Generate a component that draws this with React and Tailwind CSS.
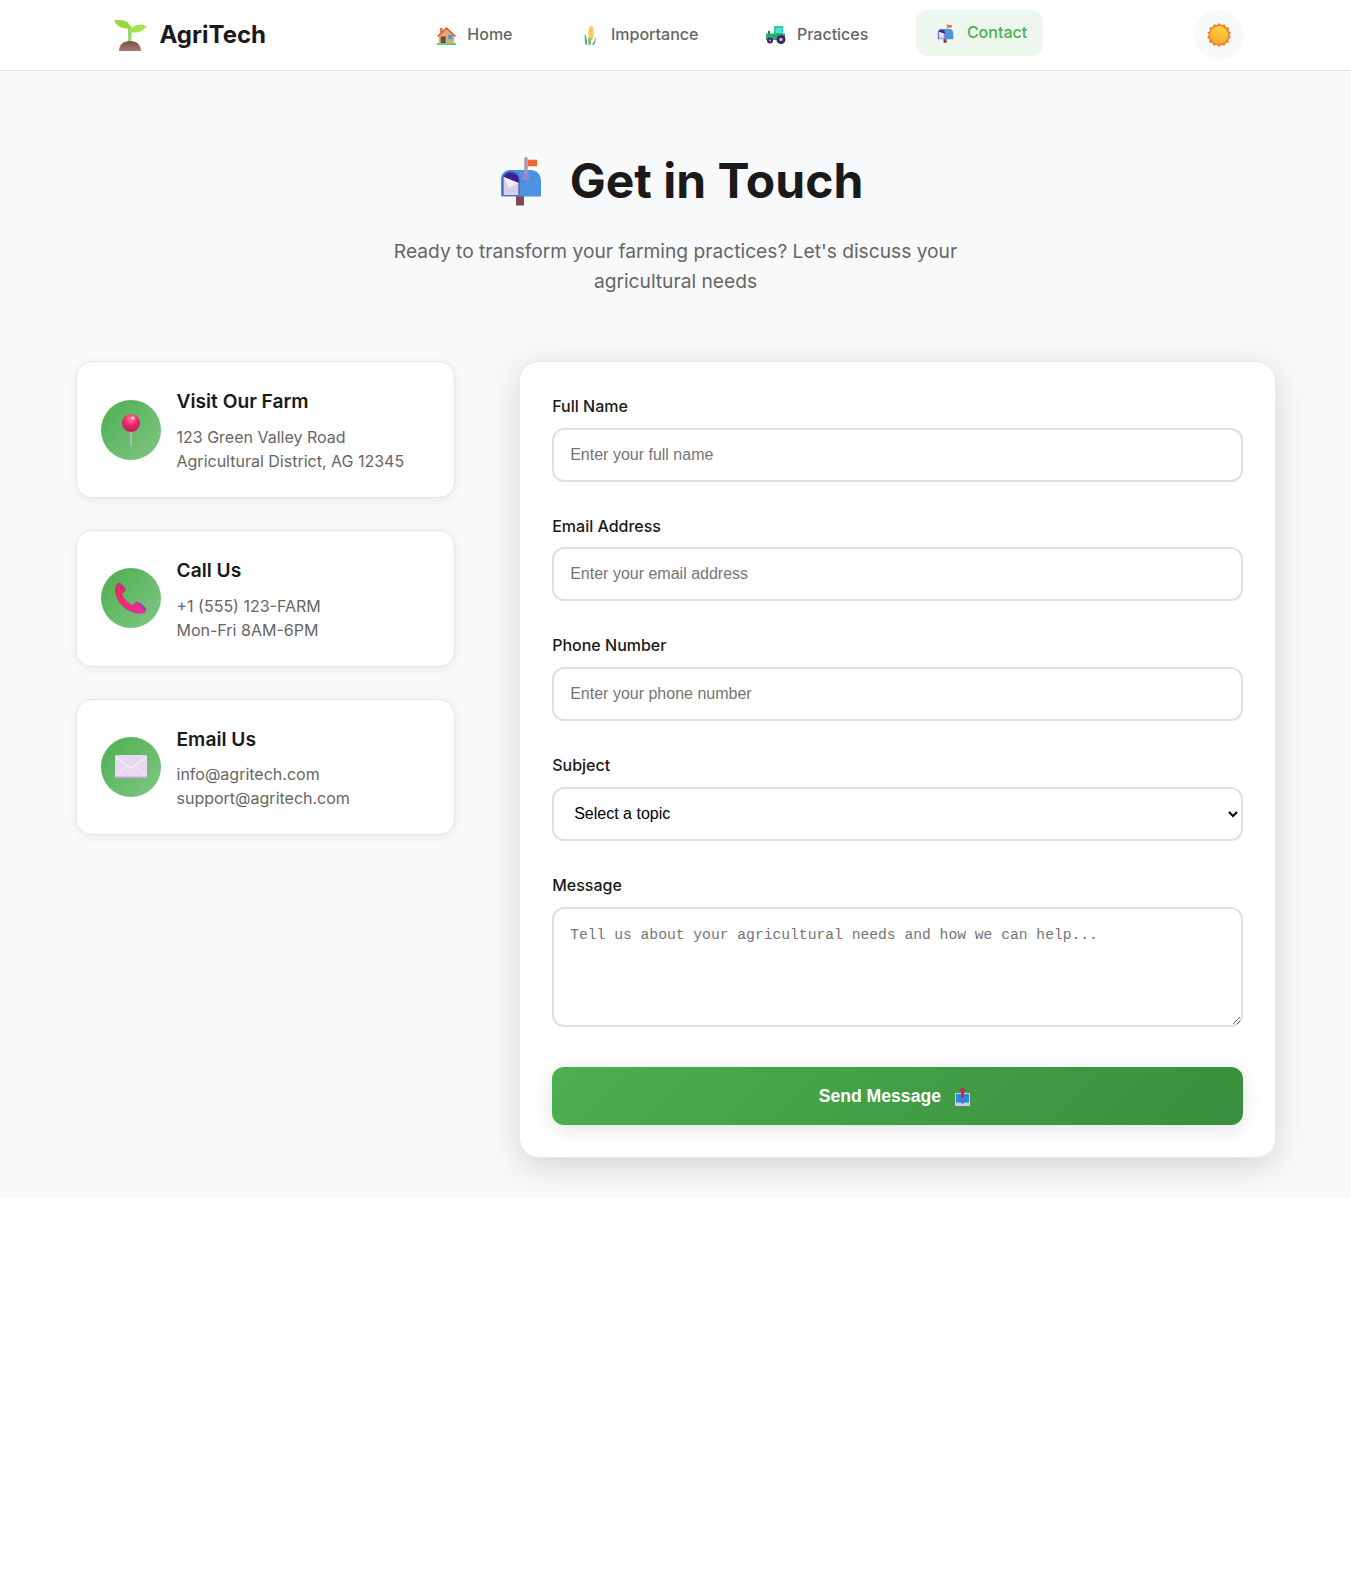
import { useState } from 'react';

// Emoji drawings: no emoji font in the sandbox, so each one is a small svg
function Seedling({ className }) {
    return (
        <svg className={className} viewBox="0 0 33 31" fill="none">
            <defs>
                <linearGradient id="soil" x1="0" y1="0" x2="0" y2="1">
                    <stop offset="0" stopColor="#7f4f45" />
                    <stop offset="1" stopColor="#a67c70" />
                </linearGradient>
            </defs>
            <path d="M14 6h3.500v17H14z" fill="#9ad86d" />
            <path d="M0 .5C5-.5 13 0 15.500 5c.7 1.500.5 3.500-1 3.500C8 8.500 2.500 6 0 .5z" fill="#97d739" />
            <path d="M32.500 6C28 4 20 4 17 8.500c-.8 1.500-.5 3.500 1 4C24 13 30 11 32.500 6z" fill="#a6e24f" />
            <path d="M5 31c0-6 4-10 11-10s11 4 11 10z" fill="url(#soil)" />
        </svg>
    );
}

function House({ className }) {
    return (
        <svg className={className} viewBox="0 0 20 20" fill="none">
            <path d="M3 2h3v5H3z" fill="#b98a62" />
            <path d="M2 9 10 2l8 7v9H2z" fill="#e3a877" />
            <path d="M0 10.500 10 1l10 9.500-1.200 1.200L10 3.400 1.200 11.700z" fill="#e6532f" />
            <path d="M4 11h5v7H4z" fill="#70453a" />
            <path d="M11.500 9.500h4.500v4.500h-4.500z" fill="#3fa4ec" />
            <path d="M0 18h20v2H0z" fill="#4fce72" />
        </svg>
    );
}

function Corn({ className }) {
    return (
        <svg className={className} viewBox="0 0 13 20" fill="none">
            <path d="M7 0c2-.500 4 .500 3 2.500-.5 1 1 1.500.5 3.500-.300 1.500.5 2 0 4-.5 2-1 4-2.500 5.500L5 14C4 9 5 2 7 0z" fill="#f6c544" />
            <path d="M7 3h4M6.500 6.500h5M6.500 10h4" stroke="#fbe28c" strokeWidth="1" />
            <path d="M1 8c1.500 2 2.500 6 2.500 12H1.500C.8 16 .3 11 1 8z" fill="#6ba77f" />
            <path d="M12.500 11c.3 3-.3 6-1.500 9H8.500C11 17 11.800 14 12.500 11z" fill="#4f9aa0" />
            <path d="M4.500 13h3v7h-3z" fill="#7fb98b" />
        </svg>
    );
}

function Tractor({ className }) {
    return (
        <svg className={className} viewBox="0 0 20 18" fill="none">
            <path d="M8 0h9v8H8z" fill="#2ecf8d" />
            <path d="M10 2h6v5h-6z" fill="#4fd8f0" />
            <path d="M0 7.500h19v6.500H0z" fill="#27ad6b" />
            <path d="M2 5h2v3H2z" fill="#1d7d54" />
            <circle cx="4" cy="14.500" r="3" fill="#43235f" />
            <circle cx="4" cy="14.500" r="1" fill="#c9b8d8" />
            <circle cx="15" cy="13.500" r="4.500" fill="#43235f" />
            <circle cx="15" cy="13.500" r="1.700" fill="#c9b8d8" />
        </svg>
    );
}

function Mailbox({ className }) {
    return (
        <svg className={className} viewBox="0 0 40 49" fill="none">
            <path d="M15 39h8v9.500h-8z" fill="#7d4a4f" />
            <path d="M9 13h21c6 0 10 5 10 11v14.500c0 .8-.5 1-1 1H1c-.8 0-1-.4-1-1V22c0-5 4-9 9-9z" fill="#4d92e0" />
            <path d="M1.500 38.500V22c0-4 3.500-7.500 8-7.500s9 3.500 9 7.500v16.500z" fill="#3b4fb5" />
            <path d="M2.500 38V22c0-3.500 3-6 7-6s7.500 2.500 8 6v16z" fill="#451d8a" />
            <path d="M2.500 20l15 6v12h-15z" fill="#d8cfe6" />
            <path d="M2.500 20l15 6-10 5z" fill="#f3eff7" />
            <path d="M23.300 1.500c0-2 3.400-2 3.400 0v19h-3.400z" fill="#a59bb8" />
            <circle cx="25" cy="20" r="3.500" fill="#9088c8" />
            <path d="M26.700 2.700H36v6.600h-9.300z" fill="#f4632e" />
        </svg>
    );
}

function Sun({ className }) {
    return (
        <svg className={className} viewBox="0 0 24 24" fill="none">
            <defs>
                <linearGradient id="sunCore" x1="0.7" y1="0" x2="0.3" y2="1">
                    <stop offset="0" stopColor="#fcd53f" />
                    <stop offset="1" stopColor="#f6a92c" />
                </linearGradient>
            </defs>
            <path d="M12 0l2.500 2 3-.8 1.300 2.800 3 .6-.2 3.100 2.400 2-1.600 2.300 1.600 2.300-2.400 2 .2 3.100-3 .6-1.300 2.800-3-.8L12 24l-2.500-2-3 .8-1.300-2.800-3-.6.2-3.100-2.400-2L2 12 .4 9.700l2.400-2-.2-3.100 3-.6 1.300-2.800 3 .8z" fill="#f5822c" />
            <circle cx="12" cy="12" r="9" fill="url(#sunCore)" />
        </svg>
    );
}

function Pin({ className }) {
    return (
        <svg className={className} viewBox="0 0 18 31" fill="none">
            <defs>
                <radialGradient id="pinHead" cx="0.5" cy="0.25" r="0.75">
                    <stop offset="0" stopColor="#ff7d9c" />
                    <stop offset="0.5" stopColor="#f0266b" />
                    <stop offset="1" stopColor="#bc1a5e" />
                </radialGradient>
            </defs>
            <path d="M8 15h2v16H8z" fill="#b9b3c1" />
            <circle cx="9" cy="9" r="9" fill="url(#pinHead)" />
            <circle cx="11" cy="4" r="1.500" fill="#ffd2de" />
        </svg>
    );
}

function Phone({ className }) {
    return (
        <svg className={className} viewBox="0 0 32 32" fill="none">
            <defs>
                <linearGradient id="phoneBody" x1="0" y1="0" x2="1" y2="1">
                    <stop offset="0" stopColor="#f0284a" />
                    <stop offset="1" stopColor="#e52ea8" />
                </linearGradient>
            </defs>
            <path d="M1 3C2 1 4 .5 5.500 1l4.500 5c1 1.500 1 3-.5 4l-2.500 1.500c1.500 5 6 9.500 11 11.500l2-2.500c1-1.300 2.500-1.300 4 0l6 5.500c1.500 1.500 1.500 3.500 0 4.500-1 1-4 1.500-8 1C11 29.500 1.500 21 0 9.500-.2 7 .3 4.500 1 3z" fill="url(#phoneBody)" />
            <path d="M2 2.500 5 1l5 5-2.500 2zM23 23l2.500-2 6 5.500-2.500 2z" fill="#a33e9c" />
        </svg>
    );
}

function Envelope({ className }) {
    return (
        <svg className={className} viewBox="0 0 32 23" fill="none">
            <rect width="32" height="23" rx="1.500" fill="#e9d9f0" />
            <path d="M0 1l16 11.500L32 1v1.500L16 14 0 2.500z" fill="#f7eefa" />
            <path d="M0 22l12-11M32 22 20 11" stroke="#f7eefa" strokeWidth="1" />
            <path d="M0 21.500h32V23H0z" fill="#c9a9e0" />
        </svg>
    );
}

function Outbox({ className }) {
    return (
        <svg className={className} viewBox="0 0 15 19" fill="none">
            <path d="M0 6h15v13H0z" fill="#d9c9e6" />
            <path d="M1 7h13v8.500H9.500l-2 1.500-2-1.500H1z" fill="#2f87dc" />
            <path d="M7.500 0 11 4H9v7H6V4H4z" fill="#d91f5c" />
        </svg>
    );
}

const navLinks = [
    { label: 'Home', icon: <House className="w-[19px] h-[19px]" /> },
    { label: 'Importance', icon: <Corn className="w-[12px] h-[19px]" /> },
    { label: 'Practices', icon: <Tractor className="w-[20px] h-[18px]" /> },
    { label: 'Contact', icon: <Mailbox className="w-[17px] h-[19px]" />, active: true },
];

const infoCards = [
    { title: 'Visit Our Farm', lines: ['123 Green Valley Road', 'Agricultural District, AG 12345'], icon: <Pin className="w-[18px] h-[31px]" /> },
    { title: 'Call Us', lines: ['+1 (555) 123-FARM', 'Mon-Fri 8AM-6PM'], icon: <Phone className="w-[32px] h-[32px]" /> },
    { title: 'Email Us', lines: ['info@agritech.com', 'support@agritech.com'], icon: <Envelope className="w-[32px] h-[23px]" /> },
];

const fieldClass = "block w-full h-[54px] px-4 rounded-xl border-2 border-[#e0e0e0] bg-white text-base text-black placeholder:text-[#757575] outline-none font-['Liberation_Sans',sans-serif]";

function Field({ label, children, className = 'mb-8' }) {
    return (
        <div className={className}>
            <label className="block mb-2 text-base leading-[25.6px] font-medium text-[#1a1a1a]">{label}</label>
            {children}
        </div>
    );
}

export default function App() {
    const [subject, setSubject] = useState('');

    return (
        <div className="min-h-[1586px] bg-white font-['Inter',sans-serif] text-[#1a1a1a]">
            {/* Navbar */}
            <nav className="h-[71px] bg-white border-b border-[#e2e5e9]">
                <div className="max-w-[1200px] h-full mx-auto pl-8 pr-[31.5px] flex items-center justify-between">
                    <div className="flex items-center gap-[7px]">
                        <span className="w-[45px] flex justify-center"><Seedling className="w-[33px] h-[31px]" /></span>
                        <span className="text-2xl font-bold">AgriTech</span>
                    </div>
                    <div className="flex items-center gap-8">
                        {navLinks.map((link) => (
                            <a
                                key={link.label}
                                className={`flex items-center gap-2 h-[46px] px-4 rounded-xl font-medium text-base ${link.active ? 'bg-[#edf7ee] text-[#4caf50] -translate-y-0.5' : 'text-[#666666]'}`}
                            >
                                <span className="w-[26.5px] flex justify-center">{link.icon}</span>
                                <span className="pb-0.5">{link.label}</span>
                            </a>
                        ))}
                    </div>
                    <button className="w-[50px] h-[50px] rounded-full bg-[#f8f9fa] flex items-center justify-center">
                        <Sun className="w-[24px] h-[24px]" />
                    </button>
                </div>
            </nav>

            {/* Contact section */}
            <section className="bg-[#f8f9fa] pt-20 pb-10">
                <div className="max-w-[1200px] mx-auto">
                    <div className="text-center mb-[64.8px]">
                        <h1 className="flex items-center justify-center gap-4 h-[60px] mb-[25.4px] text-5xl font-bold">
                            <span className="w-[66px] flex justify-center"><Mailbox className="w-[40px] h-[49px]" /></span>
                            Get in Touch
                        </h1>
                        <p className="max-w-[600px] mx-auto text-[19.2px] leading-[30px] text-[#666666]">
                            Ready to transform your farming practices? Let's discuss your agricultural needs
                        </p>
                    </div>

                    <div className="grid grid-cols-[379px_1fr] gap-[64.7px] items-start">
                        <div className="flex flex-col gap-8">
                            {infoCards.map((card) => (
                                <div key={card.title} className="flex items-center gap-4 p-6 bg-white rounded-2xl border border-[#e6e7e9] shadow-[0_2px_10px_rgba(0,0,0,0.07)]">
                                    <div className="w-[60px] h-[60px] shrink-0 rounded-full bg-[linear-gradient(135deg,#4caf50,#81c784)] flex items-center justify-center">
                                        {card.icon}
                                    </div>
                                    <div>
                                        <h3 className="mb-2 text-[19.2px] leading-[30.72px] font-semibold">{card.title}</h3>
                                        {card.lines.map((line) => (
                                            <p key={line} className="text-base leading-6 text-[#666666]">{line}</p>
                                        ))}
                                    </div>
                                </div>
                            ))}
                        </div>

                        <form className="p-8 bg-white rounded-[20px] border border-[#e9eaeb] shadow-[0_8px_32px_rgba(0,0,0,0.15)]">
                            <Field label="Full Name">
                                <input className={fieldClass} placeholder="Enter your full name" />
                            </Field>
                            <Field label="Email Address">
                                <input className={fieldClass} placeholder="Enter your email address" />
                            </Field>
                            <Field label="Phone Number">
                                <input className={fieldClass} placeholder="Enter your phone number" />
                            </Field>
                            <Field label="Subject">
                                <select className={fieldClass} value={subject} onChange={(e) => setSubject(e.target.value)}>
                                    <option value="">Select a topic</option>
                                    <option value="crops">Crop Management</option>
                                </select>
                            </Field>
                            <Field label="Message" className="mb-10">
                                <div className="pt-px">
                                    <textarea
                                        className="block w-full h-[120px] p-4 rounded-xl border-2 border-[#e0e0e0] bg-white text-[14.67px] leading-[20px] placeholder:text-[#757575] outline-none font-['Liberation_Mono',monospace]"
                                        placeholder="Tell us about your agricultural needs and how we can help..."
                                    />
                                </div>
                            </Field>
                            <button type="button" className="w-full h-[58px] flex items-center justify-center gap-[9px] rounded-xl bg-[linear-gradient(135deg,#4caf50,#388e3c)] text-white text-[17.6px] font-bold font-['Liberation_Sans',sans-serif] shadow-[0_4px_20px_rgba(0,0,0,0.12)]">
                                Send Message
                                <span className="w-[26px] flex justify-center"><Outbox className="w-[15px] h-[19px]" /></span>
                            </button>
                        </form>
                    </div>
                </div>
            </section>
        </div>
    );
}
